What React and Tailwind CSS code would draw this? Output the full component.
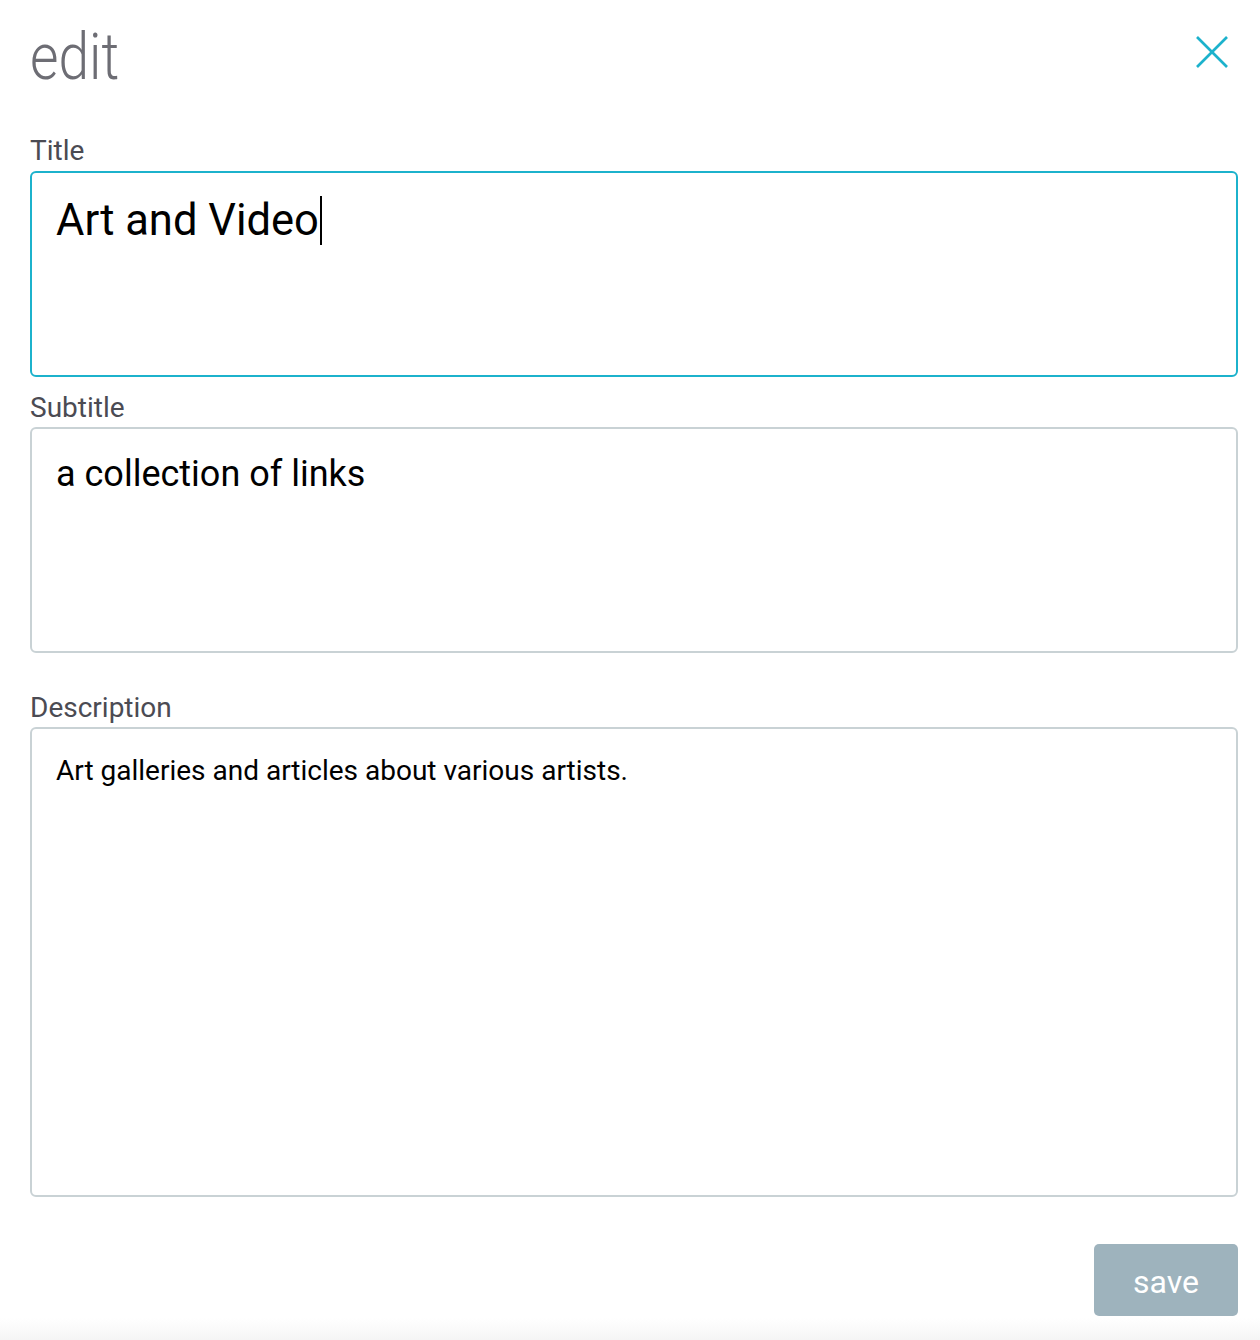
import React from "react";

const FONT = { fontFamily: "Roboto, 'Noto Sans', sans-serif" };

function Field({ label, height, active, textClass, padTop, labelGap, children }) {
  return (
    <div className="flex flex-col">
      <label className="text-[28px] leading-[32px] text-[#4b4b53]">{label}</label>
      <div
        className={[
          "w-full border-2 rounded-[6px] pl-[24px] pr-6",
          active ? "border-[#1cb2cc]" : "border-[#c9d2d5]",
          labelGap,
          height,
          padTop,
        ].join(" ")}
      >
        <div className={textClass}>{children}</div>
      </div>
    </div>
  );
}

export default function App() {
  return (
    <div style={FONT} className="w-[1260px] min-h-[1340px] bg-white flex flex-col">
      <div className="pl-[30px] pr-[22px] pt-[26px] flex flex-col">
        <header className="flex items-start justify-between">
          <h1 className="text-[64px] leading-[64px] font-light text-[#6d6d74] inline-block origin-left scale-x-[0.86]">edit</h1>
          <button className="mt-[10px] mr-[10px] text-[#1cb2cc]" aria-label="close">
            <svg width="32" height="32" viewBox="0 0 32 32" fill="none" stroke="currentColor" strokeWidth="2.6">
              <line x1="1" y1="1" x2="31" y2="31" />
              <line x1="31" y1="1" x2="1" y2="31" />
            </svg>
          </button>
        </header>

        <div className="mt-[45px]">
          <Field
            label="Title"
            active
            height="h-[206px]"
            labelGap="mt-1"
            padTop="pt-[23px]"
            textClass="text-[43.5px] leading-[48px] text-black flex items-center"
          >
            Art and Video
            <span className="inline-block w-[2px] h-[49px] bg-black ml-[1px]" />
          </Field>
        </div>

        <div className="mt-[15px]">
          <Field
            label="Subtitle"
            height="h-[226px]"
            labelGap="mt-[3px]"
            padTop="pt-[25px]"
            textClass="text-[36px] leading-[40px] text-black"
          >
            a collection of links
          </Field>
        </div>

        <div className="mt-[39px]">
          <Field
            label="Description"
            height="h-[470px]"
            labelGap="mt-[3px]"
            padTop="pt-[26px]"
            textClass="text-[28px] leading-[32px] text-black"
          >
            Art galleries and articles about various artists.
          </Field>
        </div>

        <div className="mt-[47px] flex justify-end">
          <button className="w-[144px] h-[72px] rounded-[5px] bg-[#9eb3bd] text-white text-[32px] leading-none pt-[4px]">
            save
          </button>
        </div>
      </div>
      <div className="mt-[2px] flex-1 min-h-[22px] bg-gradient-to-b from-white to-[#f5f5f5]" />
    </div>
  );
}
